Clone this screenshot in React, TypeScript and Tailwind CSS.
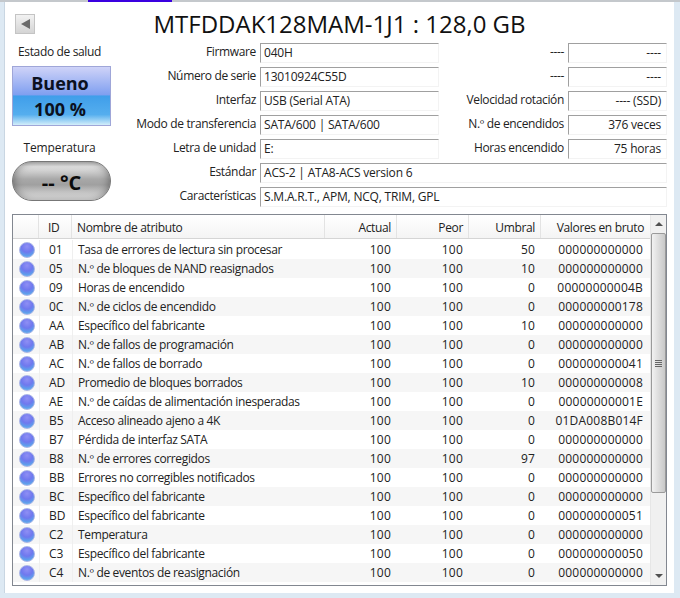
const rows: [string, string, number, number, number, string][] = [
  ['01', 'Tasa de errores de lectura sin procesar', 100, 100, 50, '000000000000'],
  ['05', 'N.º de bloques de NAND reasignados', 100, 100, 10, '000000000000'],
  ['09', 'Horas de encendido', 100, 100, 0, '00000000004B'],
  ['0C', 'N.º de ciclos de encendido', 100, 100, 0, '000000000178'],
  ['AA', 'Específico del fabricante', 100, 100, 10, '000000000000'],
  ['AB', 'N.º de fallos de programación', 100, 100, 0, '000000000000'],
  ['AC', 'N.º de fallos de borrado', 100, 100, 0, '000000000041'],
  ['AD', 'Promedio de bloques borrados', 100, 100, 10, '000000000008'],
  ['AE', 'N.º de caídas de alimentación inesperadas', 100, 100, 0, '00000000001E'],
  ['B5', 'Acceso alineado ajeno a 4K', 100, 100, 0, '01DA008B014F'],
  ['B7', 'Pérdida de interfaz SATA', 100, 100, 0, '000000000000'],
  ['B8', 'N.º de errores corregidos', 100, 100, 97, '000000000000'],
  ['BB', 'Errores no corregibles notificados', 100, 100, 0, '000000000000'],
  ['BC', 'Específico del fabricante', 100, 100, 0, '000000000000'],
  ['BD', 'Específico del fabricante', 100, 100, 0, '000000000051'],
  ['C2', 'Temperatura', 100, 100, 0, '000000000000'],
  ['C3', 'Específico del fabricante', 100, 100, 0, '000000000050'],
  ['C4', 'N.º de eventos de reasignación', 100, 100, 0, '000000000000'],
];

function Field({ value, right, className }: { value: string; right?: boolean; className: string }) {
  return (
    <div
      className={`h-5 border border-t-[#a0a0a0] border-l-[#a0a0a0] border-r-[#f3f3f3] border-b-[#f3f3f3] px-[3px] leading-[17px] whitespace-nowrap tracking-[-0.2px] ${right ? 'text-right pr-[5px]' : ''} ${className}`}
    >
      {value}
    </div>
  );
}

function Label({ text }: { text: string }) {
  return <div className="h-5 text-right leading-[18px] whitespace-nowrap tracking-[-0.35px]">{text}</div>;
}

function Orb() {
  return (
    <div className="w-4 h-4 rounded-full bg-[radial-gradient(circle_at_50%_25%,#8f8ff4_0%,#6f78ee_45%,#5f9cec_72%,#78cdf2_100%)] border border-[#a9b4e6]" />
  );
}

export default function App() {
  return (
    <div
      className="w-[680px] h-[598px] bg-[#dde9f3] text-[12px] text-[#222] overflow-hidden"
      style={{ fontFamily: '"Open Sans", "Noto Sans", sans-serif' }}
    >
      <div className="h-[2px] bg-[#c4c8cc] pl-[88px]">
        <div className="w-[84px] h-[3px] bg-[#3a00e0]" />
      </div>
      <div className="ml-[4px] w-[670px] h-[591px] bg-white pt-[9px] border-l border-[#c9d6e2]">
        <div className="flex h-[31px]">
          <div className="ml-[10px] mt-[3px] w-5 h-5 border border-[#c4c4c4] bg-gradient-to-b from-[#f2f2f2] to-[#d4d4d4] flex items-center justify-center">
            <div className="w-0 h-0 border-y-[5px] border-y-transparent border-r-[9px] border-r-[#6b6b6b]" />
          </div>
          <div className="flex-1 text-center text-[24px] leading-[26px] text-[#111] pr-[30px]">
            MTFDDAK128MAM-1J1 : 128,0 GB
          </div>
        </div>

        <div className="flex h-[172px]">
          <div className="ml-[7px] w-[100px] flex flex-col items-center">
            <div className="h-[20px] leading-[18px] mt-[1px] pr-[4px] tracking-[-0.35px]">Estado de salud</div>
            <div className="w-[99px] h-[60px] mt-[3px] self-start border border-[#9fa6d8] bg-[linear-gradient(to_bottom,#cfd3f8_0%,#7f9ff0_48%,#3f9eea_50%,#55aeee_82%,#d3eefa_100%)] flex flex-col items-center text-[#0b1020] font-bold text-[18px] leading-[26px] pt-[3px] pr-[3px]">
              <div>Bueno</div>
              <div>100 %</div>
            </div>
            <div className="h-[20px] mt-[13px] leading-[18px] pr-[4px] tracking-[-0.1px]">Temperatura</div>
            <div className="w-[99px] h-[40px] mt-[2px] self-start rounded-[20px] border border-[#777] bg-[linear-gradient(to_bottom,#c8c8c8_0%,#e6e6e6_12%,#a8a8a8_45%,#a0a0a0_60%,#ececec_100%)] shadow-[inset_0_0_9px_rgba(0,0,0,0.4)] text-center font-bold text-[20px] leading-[42px] text-[#0b0b0b] whitespace-pre">
              -- °C
            </div>
          </div>

          <div className="ml-[13px] w-[560px] grid grid-cols-[132px_179px_121px_99px] gap-x-[4px] gap-y-[4px] content-start pt-[1px]">
            <Label text="Firmware" />
            <Field value="040H" className="" />
            <Label text="----" />
            <Field value="----" right className="" />
            <Label text="Número de serie" />
            <Field value="13010924C55D" className="" />
            <Label text="----" />
            <Field value="----" right className="" />
            <Label text="Interfaz" />
            <Field value="USB (Serial ATA)" className="" />
            <Label text="Velocidad rotación" />
            <Field value="---- (SSD)" right className="" />
            <Label text="Modo de transferencia" />
            <Field value="SATA/600 | SATA/600" className="" />
            <Label text="N.º de encendidos" />
            <Field value="376 veces" right className="" />
            <Label text="Letra de unidad" />
            <Field value="E:" className="" />
            <Label text="Horas encendido" />
            <Field value="75 horas" right className="" />
            <Label text="Estándar" />
            <Field value="ACS-2 | ATA8-ACS version 6" className="col-span-3" />
            <Label text="Características" />
            <Field value="S.M.A.R.T., APM, NCQ, TRIM, GPL" className="col-span-3" />
          </div>
        </div>

        <div className="ml-[7px] w-[655px] h-[372px] border border-[#828790] flex">
          <div className="w-[637px]">
            <div className="flex h-[24px] bg-gradient-to-b from-white to-[#f4f4f4] border-b border-[#d5d5d5] leading-[26px] tracking-[-0.35px]">
              <div className="w-[26px] border-r border-[#e3e3e3]" />
              <div className="w-[33px] border-r border-[#e3e3e3] pl-[9px]">ID</div>
              <div className="w-[253px] border-r border-[#e3e3e3] pl-[5px]">Nombre de atributo</div>
              <div className="w-[72px] border-r border-[#e3e3e3] text-right pr-[5px]">Actual</div>
              <div className="w-[72px] border-r border-[#e3e3e3] text-right pr-[5px]">Peor</div>
              <div className="w-[72px] border-r border-[#e3e3e3] text-right pr-[5px]">Umbral</div>
              <div className="w-[109px] text-right pr-[6px]">Valores en bruto</div>
            </div>
            <div className="pt-[1px]">
              {rows.map((r, i) => (
                <div key={r[0]} className={`flex h-[19px] leading-[19px] ${i % 2 ? 'bg-[#f6f6f6]' : 'bg-white'}`}>
                  <div className="w-[26px] flex items-center justify-center pl-[1px]"><Orb /></div>
                  <div className="w-[33px] pl-[9px] border-l border-[#efefef]">{r[0]}</div>
                  <div className="w-[253px] pl-[5px] border-l border-[#efefef] whitespace-nowrap tracking-[-0.35px]">{r[1]}</div>
                  <div className="w-[72px] text-right pr-[6px] tracking-[0.2px]">{r[2]}</div>
                  <div className="w-[72px] text-right pr-[6px] tracking-[0.2px]">{r[3]}</div>
                  <div className="w-[72px] text-right pr-[6px] tracking-[0.2px]">{r[4]}</div>
                  <div className="w-[109px] text-right pr-[7px] tracking-[0.2px]">{r[5]}</div>
                </div>
              ))}
            </div>
          </div>
          <div className="w-[17px] bg-[#f0f0f0] flex flex-col items-center border-l border-[#e6e6e6]">
            <div className="h-[18px] flex items-center justify-center">
              <div className="w-0 h-0 border-x-[4px] border-x-transparent border-b-[4px] border-b-[#505050]" />
            </div>
            <div className="w-[15px] h-[260px] border border-[#9a9a9a] rounded-[2px] bg-gradient-to-r from-[#f2f2f2] to-[#c8c8c8] flex flex-col items-center justify-center gap-[1px]">
              <div className="w-[7px] h-px bg-[#666]" />
              <div className="w-[7px] h-px bg-[#666]" />
              <div className="w-[7px] h-px bg-[#666]" />
              <div className="w-[7px] h-px bg-[#666]" />
            </div>
            <div className="flex-1" />
            <div className="h-[18px] flex items-center justify-center">
              <div className="w-0 h-0 border-x-[4px] border-x-transparent border-t-[4px] border-t-[#505050]" />
            </div>
          </div>
        </div>
      </div>
    </div>
  );
}
